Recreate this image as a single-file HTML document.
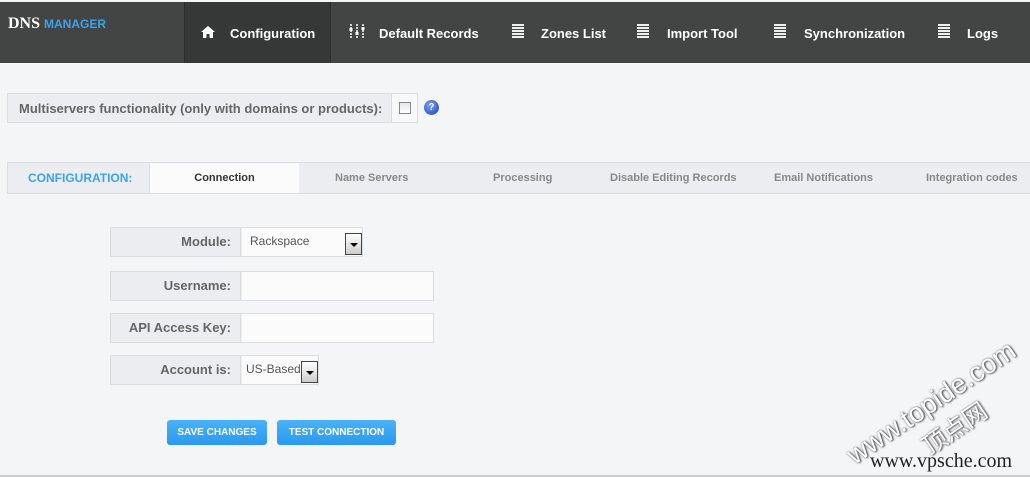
<!DOCTYPE html>
<html><head><meta charset="utf-8">
<style>
*{margin:0;padding:0;box-sizing:border-box}
body{width:1030px;height:477px;background:#f4f5f7;font-family:"Liberation Sans",sans-serif;position:relative;overflow:hidden}
.hdr{position:absolute;left:0;top:2px;width:1030px;height:61px;background:#434444;}
.logo{position:absolute;left:8px;top:13px;color:#fff;font-weight:bold;font-size:16px;font-family:"Liberation Serif",serif}
.logo span{color:#3aa3ee;font-size:12px;font-family:"Liberation Sans",sans-serif}
.act{position:absolute;left:184px;top:0;width:147px;height:61px;background:#363737;border-left:1px solid #2c2c2c;border-right:1px solid #2c2c2c}
.nav{position:absolute;top:24px;color:#fff;font-size:13px;font-weight:bold;white-space:nowrap}
.ico{position:absolute;top:22px}
.lst{width:12px;height:14px;background:repeating-linear-gradient(#eee 0 2px,#434444 2px 3px)}
.ms{position:absolute;left:7px;top:93px;width:385px;height:30px;background:#ecedf1;border:1px solid #dcdde0;font-size:13px;font-weight:bold;color:#666;padding:7px 0 0 11px;white-space:nowrap}
.cb{position:absolute;left:392px;top:93px;width:26px;height:30px;background:#f8f9fa;border:1px solid #dcdde0;border-left:none}
.cb i{position:absolute;left:7px;top:8px;width:12px;height:12px;border:1px solid #888;background:linear-gradient(#e6e6e6,#fff)}
.help{position:absolute;left:424px;top:100px;width:15px;height:15px;border-radius:50%;background:radial-gradient(circle at 40% 35%,#7aa0ff,#1e3fa8);color:#fff;font-size:10px;font-weight:bold;text-align:center;line-height:15px}
.tabs{position:absolute;left:7px;top:162px;width:1030px;height:32px;background:#ecedf1;border:1px solid #dcdde0;border-right:none;font-size:11px;font-weight:bold;color:#888}
.tabs div{position:absolute;top:9px;white-space:nowrap}
.tact{position:absolute!important;left:141px;top:0!important;width:150px;height:30px;background:#fbfbfc;color:#333;text-align:center;padding-top:9px;border-left:1px solid #dcdde0}
.row{position:absolute;left:110px;height:30px;border:1px solid #dcdde0;background:#ecedf1}
.lab{position:absolute;left:0;top:0;width:130px;height:28px;text-align:right;padding:6px 9px 0 0;font-size:13px;font-weight:bold;color:#666;border-right:1px solid #dcdde0;white-space:nowrap}
.inp{position:absolute;left:131px;top:0;height:28px;background:#fbfbfc;font-size:12px;color:#555;padding:6px 0 0 8px;white-space:nowrap}
.sel{position:absolute;width:17px;height:22px;border:1px solid #444;background:linear-gradient(#fff,#ccc)}
.sel:after{content:"";position:absolute;left:4px;top:9px;border-left:4px solid transparent;border-right:4px solid transparent;border-top:4px solid #000}
.btn{position:absolute;top:420px;height:25px;background:linear-gradient(#4ab2fb,#2a99ee);border-radius:3px;color:#fff;font-size:10px;font-weight:bold;text-align:center;line-height:26px}
.wm{position:absolute;color:#fff;font-family:"Liberation Sans","Noto Sans CJK SC",sans-serif;text-shadow:0 0 2px #666,1px 1px 2px #444;white-space:nowrap}
</style></head><body>
<div class="hdr">
<div class="logo">DNS <span>MANAGER</span></div>
<div class="act"></div>
<svg class="ico" style="left:200px;top:23px" width="16" height="14" viewBox="0 0 16 14"><path d="M8 1 L1 7 L3 7 L3 13 L6.5 13 L6.5 9 L9.5 9 L9.5 13 L13 13 L13 7 L15 7 Z" fill="#fff"/></svg>
<div class="nav" style="left:230px">Configuration</div>
<svg class="ico" style="left:349px" width="16" height="15" viewBox="0 0 16 15"><g stroke="#fff" stroke-width="1.5"><line x1="2" y1="0" x2="2" y2="15" stroke-dasharray="2 1"/><line x1="8" y1="0" x2="8" y2="15" stroke-dasharray="2 1"/><line x1="14" y1="0" x2="14" y2="15" stroke-dasharray="2 1"/></g><rect x="0.5" y="4" width="3" height="3" fill="#fff"/><rect x="6.5" y="8" width="3" height="3" fill="#fff"/><rect x="12.5" y="3" width="3" height="3" fill="#fff"/></svg>
<div class="nav" style="left:379px">Default Records</div>
<div class="ico lst" style="left:512px"></div><div class="nav" style="left:541px">Zones List</div>
<div class="ico lst" style="left:637px"></div><div class="nav" style="left:667px">Import Tool</div>
<div class="ico lst" style="left:774px"></div><div class="nav" style="left:804px">Synchronization</div>
<div class="ico lst" style="left:938px"></div><div class="nav" style="left:967px">Logs</div>
</div>

<div class="ms">Multiservers functionality (only with domains or products):</div>
<div class="cb"><i></i></div>
<div class="help">?</div>

<div class="tabs">
<div style="left:20px;color:#3aa3ee;font-size:12px;top:8px">CONFIGURATION:</div>
<div class="tact">Connection</div>
<div style="left:327px">Name Servers</div>
<div style="left:485px">Processing</div>
<div style="left:602px">Disable Editing Records</div>
<div style="left:766px">Email Notifications</div>
<div style="left:918px">Integration codes</div>
</div>

<div class="row" style="top:227px;width:253px"><div class="lab">Module:</div><div class="inp" style="width:120px">Rackspace</div><div class="sel" style="left:234px;top:5px"></div></div>
<div class="row" style="top:271px;width:324px"><div class="lab">Username:</div><div class="inp" style="width:191px"></div></div>
<div class="row" style="top:313px;width:324px"><div class="lab">API Access Key:</div><div class="inp" style="width:191px"></div></div>
<div class="row" style="top:355px;width:209px"><div class="lab">Account is:</div><div class="inp" style="width:76px;padding-left:4px">US-Based</div><div class="sel" style="left:190px;top:5px"></div></div>

<div class="btn" style="left:167px;width:100px">SAVE CHANGES</div>
<div class="btn" style="left:277px;width:119px">TEST CONNECTION</div>

<div class="wm" style="left:858px;top:440px;font-size:27px;transform:rotate(-34deg);transform-origin:left bottom;height:30px;line-height:30px">www.topide.com</div>
<div class="wm" style="left:934px;top:432px;font-size:24px;transform:rotate(-34deg);transform-origin:left bottom;height:30px;line-height:30px">顶点网</div>
<div style="position:absolute;left:870px;top:450px;font-family:'Liberation Serif',serif;font-size:20px;color:#222">www.vpsche.com</div>
<div style="position:absolute;left:0;top:475px;width:1030px;height:2px;background:#ccc"></div>
</body></html>
